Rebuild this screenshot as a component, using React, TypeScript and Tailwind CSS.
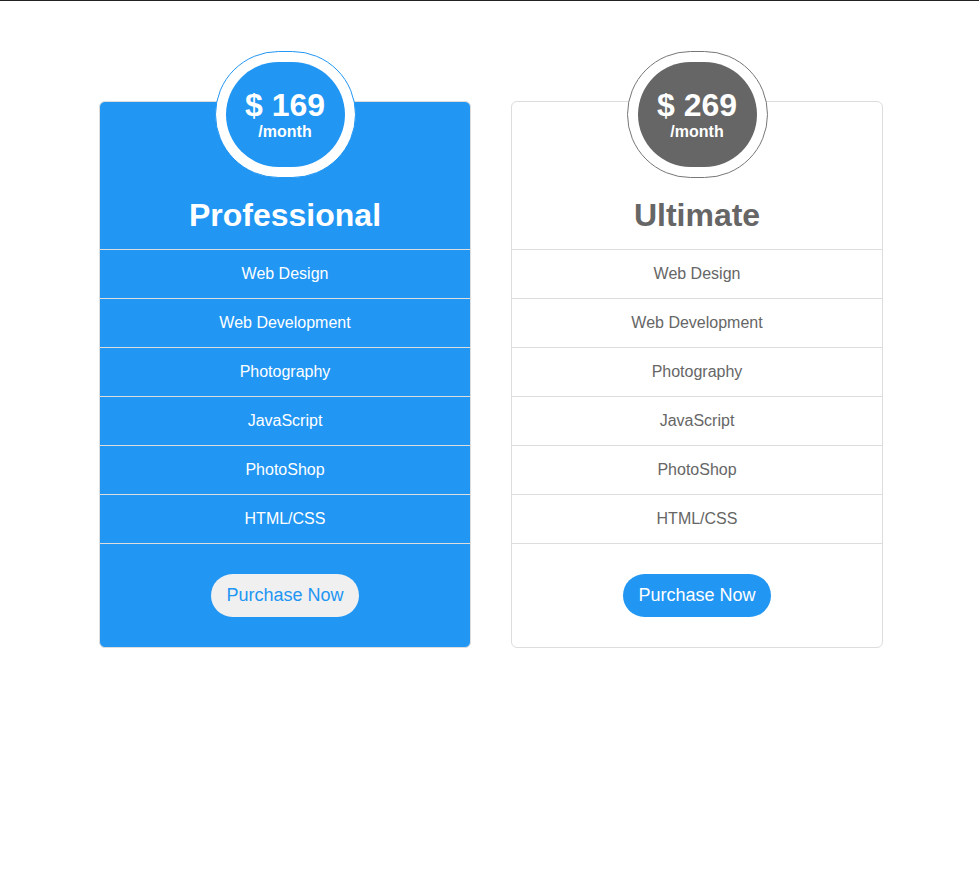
const features = ["Web Design", "Web Development", "Photography", "JavaScript", "PhotoShop", "HTML/CSS"];

interface PlanProps {
  price: string;
  name: string;
  featured?: boolean;
}

const Plan = ({ price, name, featured }: PlanProps) => {
  return (
    <div
      className={`w-[372px] rounded-[6px] border border-[#dddddd] ${
        featured ? "bg-[#2196F3] text-white" : "bg-white text-[#666666]"
      }`}
    >
      {/* price bubble */}
      <div className="-mt-[51px] flex justify-center">
        <div
          className={`h-[127px] w-[141px] rounded-full border bg-white p-[10px] ${
            featured ? "border-[#2196F3]" : "border-[#777777]"
          }`}
        >
          <div
            className={`flex h-full w-full flex-col items-center justify-center rounded-full pb-[2px] text-white ${
              featured ? "bg-[#2196F3]" : "bg-[#666666]"
            }`}
          >
            <span className="text-[32px] font-bold leading-[36px]">{price}</span>
            <span className="text-[16px] font-bold leading-[18px]">/month</span>
          </div>
        </div>
      </div>

      <div className="flex h-[71px] items-center justify-center pt-[3px]">
        <h2 className="text-[32px] font-bold leading-[36px]">{name}</h2>
      </div>

      <ul className="border-b border-[#dddddd]">
        {features.map((f) => (
          <li
            key={f}
            className="flex h-[49px] items-center justify-center border-t border-[#dddddd] text-[16px]"
          >
            {f}
          </li>
        ))}
      </ul>

      <div className="flex justify-center pt-[30px] pb-[30px]">
        <button
          className={`h-[43px] rounded-full px-[15px] text-[18px] ${
            featured ? "bg-[#f0f0f0] text-[#2196F3]" : "bg-[#2196F3] text-white"
          }`}
        >
          Purchase Now
        </button>
      </div>
    </div>
  );
};

export default function App() {
  return (
    <div
      className="min-h-[876px] border-t border-[#222222] bg-white"
      style={{ fontFamily: '"Liberation Sans", Arial, sans-serif' }}
    >
      <div className="flex gap-[40px] pl-[99px] pt-[100px]">
        <Plan price="$ 169" name="Professional" featured />
        <Plan price="$ 269" name="Ultimate" />
      </div>
    </div>
  );
}
